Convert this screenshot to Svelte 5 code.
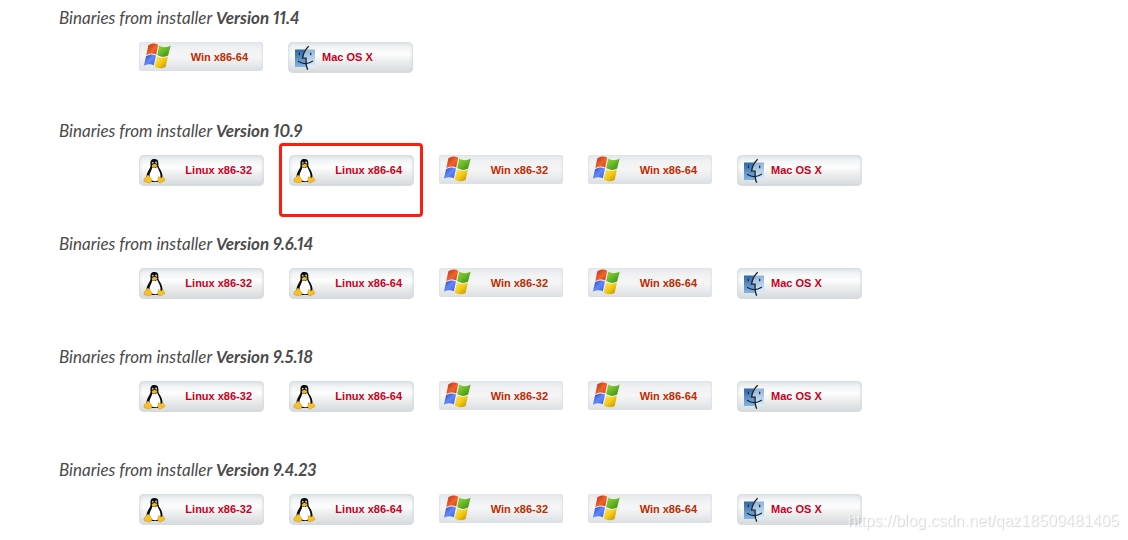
<script lang="ts">
  type Platform = { os: "linux" | "win" | "mac"; label: string }
  type Release = { version: string; platforms: Platform[]; marked?: Platform }

  const linux32: Platform = { os: "linux", label: "Linux x86-32" }
  const linux64: Platform = { os: "linux", label: "Linux x86-64" }
  const win32: Platform = { os: "win", label: "Win x86-32" }
  const win64: Platform = { os: "win", label: "Win x86-64" }
  const mac: Platform = { os: "mac", label: "Mac OS X" }
  const all = [linux32, linux64, win32, win64, mac]

  const releases: Release[] = [
    { version: "11.4", platforms: [win64, mac] },
    { version: "10.9", platforms: all, marked: linux64 },
    { version: "9.6.14", platforms: all },
    { version: "9.5.18", platforms: all },
    { version: "9.4.23", platforms: all },
  ]
</script>

<style>
  :global(body) {
    margin: 0;
    background: white;
  }

  main {
    padding: 8px 24px 0 59px;
    font-family: Lato, "Open Sans", sans-serif;
  }

  section {
    padding-bottom: 48px;
  }

  section:last-child {
    padding-bottom: 0;
  }

  h2 {
    margin: 0 0 14px;
    font-size: 17px;
    line-height: 20px;
    font-weight: 400;
    font-style: italic;
    font-variant-numeric: proportional-nums;
    color: #4a4a4a;
  }

  ul {
    display: flex;
    align-items: flex-start;
    gap: 25px;
    margin: 0;
    padding: 0 0 0 80px;
    list-style: none;
  }

  li {
    position: relative;
  }

  a {
    box-sizing: border-box;
    display: flex;
    align-items: flex-start;
    justify-content: space-between;
    width: 125px;
    height: 31px;
    padding: 0 12px 0 0;
    border-radius: 5px;
    background: linear-gradient(#dfe4e7, #f3f5f6 20%, #fdfdfd 40%, #f1f2f2 55%, #e2e3e4 80%, #d5dadd);
    box-shadow: inset 1px 0 3px #d5dbdf, inset -1px 0 3px #d5dbdf;
    font: bold 11px/30px "Liberation Sans", Arial, sans-serif;
    color: #c8001e;
    text-decoration: none;
    white-space: nowrap;
  }

  .win {
    width: 124px;
    height: 29px;
    padding: 0 15px 0 0;
    border-radius: 3px;
    background: linear-gradient(#e4e7eb, #f1f2f4 25%, #f5f5f6 50%, #e9ebed 75%, #dbdfe3);
    box-shadow: inset 1px 0 2px #dde1e6, inset -1px 0 2px #dde1e6;
    color: #bd2b00;
  }

  .mac {
    justify-content: flex-start;
    gap: 2px;
  }

  .icon {
    display: block;
    flex: none;
    width: 32px;
    height: 29px;
  }

  .defs {
    position: absolute;
    width: 0;
    height: 0;
  }

  .marker {
    position: absolute;
    inset: -12px -9px -31px -10px;
    border: 3px solid #ff1c0c;
    border-radius: 4px;
    pointer-events: none;
  }

  .watermark {
    position: fixed;
    right: 9px;
    bottom: 9px;
    font: 16px/20px "Liberation Sans", Arial, sans-serif;
    color: rgba(255, 255, 255, 0.6);
    text-shadow: 1px 1px 1px rgba(120, 120, 120, 0.3);
  }
</style>

<svelte:head><title>Binary downloads</title></svelte:head>

<!-- shared gradients for the platform icons -->
<svg class="defs" aria-hidden="true">
  <defs>
    <linearGradient id="red" x2="1" y2="1"><stop stop-color="#b52a10" /><stop offset=".55" stop-color="#f0652b" /><stop offset="1" stop-color="#d53a10" /></linearGradient>
    <linearGradient id="green" x2="1" y2="1"><stop stop-color="#99d540" /><stop offset=".5" stop-color="#65b724" /><stop offset="1" stop-color="#348519" /></linearGradient>
    <linearGradient id="blue" x2="1" y2="1"><stop stop-color="#2844b8" /><stop offset=".5" stop-color="#6288fa" /><stop offset="1" stop-color="#335bd6" /></linearGradient>
    <linearGradient id="yellow" x2="1" y2="1"><stop stop-color="#ffe765" /><stop offset=".5" stop-color="#f3ca13" /><stop offset="1" stop-color="#b98b00" /></linearGradient>
    <linearGradient id="face" x2="0" y2="1"><stop stop-color="#3067a6" /><stop offset="1" stop-color="#84b5e2" /></linearGradient>
    <linearGradient id="cheek" x2="0" y2="1"><stop stop-color="#8fb2d8" /><stop offset="1" stop-color="#dceefb" /></linearGradient>
  </defs>
</svg>

{#snippet icon(os: string)}
  <svg class="icon" viewBox="0 0 32 29" aria-hidden="true">
    {#if os === "linux"}
      <path d="M15.500 4c-3.300 0-4.300 2-4 5 .2 3-.4 4-2 6.500-1.500 2.500-2.200 5-2 7.500l5 4h7l4-4c.3-4-1-7-3.200-10-1.300-2-.8-3.500-1-5.700C19.100 5 17.900 4 15.500 4z" fill="#080808" />
      <path d="M13.300 12.200c1.500 1.400 3.600 1 5-.5.600 2.500 3.500 5.500 3.200 9.500-.2 3.200-2.500 5-5.500 5-3.300 0-5.500-2-5.600-4.700-.1-3.500 2.500-6 2.900-9.300z" fill="#fff" />
      <ellipse cx="13.800" cy="8" rx="1" ry="1.300" fill="#bbb" />
      <ellipse cx="17" cy="8" rx="1.200" ry="1.400" fill="#bbb" />
      <circle cx="14.100" cy="8.300" r=".6" />
      <circle cx="16.700" cy="8.300" r=".6" />
      <path d="M12.700 10.300l2.600-1.500 3 1.300-.4 1.500-2.700 1.500-2-1.200z" fill="#efb51b" />
      <path d="M8.600 20.200c1.500-.2 2.400 1.800 3.500 3.400 1.300 2 1.100 3.600-1 4.200-2.100.5-4-.9-5.800-1-.8-.1-.2-1.700 0-2.700.2-1.300 1.300-1.300 2.100-2 .5-.6.500-1.700 1.200-1.900z" fill="#f7c126" stroke="#b77b0c" stroke-width=".4" />
      <path d="M20 21.600c1 1.700 2.900 1.300 3.900-.1.900 1.100.7 2 1.600 2.700 1.300 1.100.2 1.700-1.300 2.200-1.500.6-2.300 1.800-4 1.400-1.500-.3-1.400-1.900-1.200-3.500.1-1.100-.1-2.500 1-2.700z" fill="#f7c126" stroke="#b77b0c" stroke-width=".4" />
    {:else if os === "win"}
      <path d="M9.400 3.200c3.500-2 6.700-2.200 9.800-.5l-2 9.800c-3.200-1.600-6.200-1.300-9.900.6z" fill="url(#red)" />
      <path d="M20.200 3.500c3.700 2.200 7.500 2.200 11.500 0l-2.600 10c-3.700 2-7.200 1.900-10.900-.4z" fill="url(#green)" />
      <path d="M7.100 14c3.700-1.900 6.700-2.100 9.900-.5l-2.200 9.800c-3.400-1.700-6.500-1.300-9.900.4z" fill="url(#blue)" />
      <path d="M18 14.200c3.600 2.100 7.200 2.200 10.900.3l-2.300 10.600c-3.700 1.700-7.400 1.700-10.800-.8z" fill="url(#yellow)" />
    {:else}
      <g transform="translate(0 1)">
        <path d="M7 6.500h10l-2.500 9H18l.2 8.500H7z" fill="url(#face)" />
        <path d="M17 6.500h10V24h-8.800L18 15.500h-3.500z" fill="url(#cheek)" />
        <path d="M20.700 3.200C17 6.500 15.200 10.500 14.600 15.200h3.500c-.2 5 .2 8.500 1.600 11.500" fill="none" stroke="#18212c" stroke-width="1.300" />
        <path d="M10.500 18.500c4.400 2.700 9.200 2.700 14-.3M11.300 10v1.700M22.700 10v1.700" fill="none" stroke="#18212c" stroke-width="1.200" stroke-linecap="round" />
      </g>
    {/if}
  </svg>
{/snippet}

<main>
  {#each releases as release}
    <section>
      <h2>Binaries from installer <strong>Version {release.version}</strong></h2>
      <ul>
        {#each release.platforms as platform}
          <li>
            <a href="#download" class={platform.os}>
              {@render icon(platform.os)}
              <span>{platform.label}</span>
            </a>
            {#if release.marked === platform}
              <div class="marker"></div>
            {/if}
          </li>
        {/each}
      </ul>
    </section>
  {/each}
</main>

<div class="watermark">https://blog.csdn.net/qaz18509481405</div>
